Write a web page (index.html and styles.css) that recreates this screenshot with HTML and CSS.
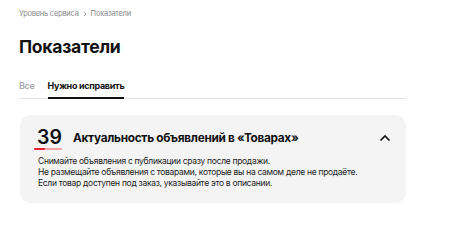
FILE: index.html
```html
<!DOCTYPE html>
<html lang="ru">
<head>
<meta charset="utf-8">
<link rel="stylesheet" href="styles.css">
</head>
<body>
<div class="page">
  <nav class="breadcrumb">
    <span>Уровень сервиса</span>
    <svg class="crumb-sep" width="6" height="6" viewBox="0 0 6 6"><path d="M2 1l2 2-2 2" fill="none" stroke="#999" stroke-width="0.9"/></svg>
    <span>Показатели</span>
  </nav>
  <h1 class="title">Показатели</h1>
  <div class="tabs">
    <div class="tab">Все</div>
    <div class="tab tab-active">Нужно исправить</div>
  </div>
  <section class="card">
    <div class="card-head">
      <div class="score">
        <span class="score-num">39</span>
        <span class="score-bar"><span class="score-fill"></span></span>
      </div>
      <div class="card-title">Актуальность объявлений в «Товарах»</div>
      <svg class="chevron" width="12" height="8" viewBox="0 0 12 8"><path d="M1.5 6.5L6 2l4.5 4.5" fill="none" stroke="#111" stroke-width="1.6"/></svg>
    </div>
    <div class="card-body">
      <p>Снимайте объявления с публикации сразу после продажи.</p>
      <p>Не размещайте объявления с товарами, которые вы на самом деле не продаёте.</p>
      <p>Если товар доступен под заказ, указывайте это в описании.</p>
    </div>
  </section>
</div>
</body>
</html>
```
FILE: styles.css
```css
* { box-sizing: border-box; }
html, body { margin: 0; background: #fff; }
body { font-family: Inter, "Noto Sans", Roboto, sans-serif; color: #111; }
.page { width: 406px; padding: 8px 0 0 19px; }
.breadcrumb { display: flex; align-items: center; gap: 3px; font-size: 7.5px; line-height: 12px; color: #8a8a8a; letter-spacing: -0.25px; }
.crumb-sep { display: block; }
.title { margin: 15px 0 0; font-size: 17.6px; line-height: 24px; font-weight: 700; letter-spacing: -0.3px; }
.tabs { display: flex; gap: 13px; margin-top: 21px; border-bottom: 1px solid #e2e2e2; }
.tab { font-size: 9px; line-height: 12px; padding-bottom: 5px; color: #9a9a9a; font-weight: 500; border-bottom: 2px solid transparent; margin-bottom: -1px; letter-spacing: -0.3px; }
.tab-active { color: #111; font-weight: 700; border-bottom-color: #111; }
.card { margin: 16px 0 0 1px; background: #f4f4f4; border-radius: 11px; padding: 12px 15px 14px 14px; }
.card-head { display: flex; align-items: flex-start; height: 24px; }
.score { display: flex; flex-direction: column; width: 28px; }
.score-num { font-size: 19.5px; line-height: 20px; font-weight: 600; padding-left: 3px; letter-spacing: 0; }
.score-bar { display: block; height: 2px; margin-top: 1px; background: #f3a0a7; border-radius: 1px; }
.score-fill { display: block; width: 11px; height: 2px; background: #e8202f; border-radius: 1px; }
.card-title { margin-left: 11px; font-size: 11.8px; line-height: 20px; font-weight: 700; flex: 1; padding-top: 1px; letter-spacing: -0.3px; }
.chevron { margin-top: 7px; }
.card-body { padding-left: 4px; margin-top: 5px; }
.card-body p { margin: 0; font-size: 8.5px; line-height: 11px; color: #222; letter-spacing: -0.3px; white-space: nowrap; }
```
